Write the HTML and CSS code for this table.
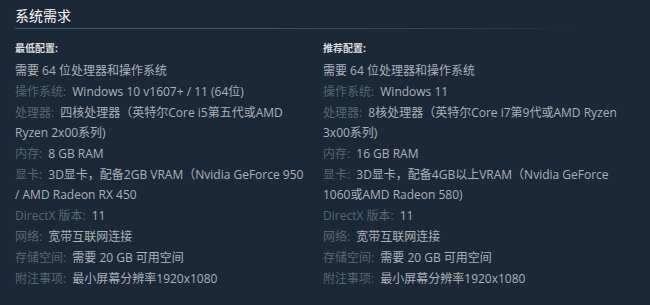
FILE: index.html
```html
<!DOCTYPE html>
<html lang="zh-CN">
<head>
<meta charset="utf-8">
<link rel="stylesheet" href="styles.css">
</head>
<body>
<div class="sysreq">
  <h2 class="title">系统需求</h2>
  <div class="cols">
    <div class="col">
      <div class="head">最低配置:</div>
      <ul class="list">
        <li>需要 64 位处理器和操作系统</li>
        <li><span class="lbl">操作系统:</span> Windows 10 v1607+ / 11 (64位)</li>
        <li><span class="lbl">处理器:</span> 四核处理器（英特尔Core i5第五代或AMD Ryzen 2x00系列)</li>
        <li><span class="lbl">内存:</span> 8 GB RAM</li>
        <li><span class="lbl">显卡:</span> 3D显卡，配备2GB VRAM（Nvidia GeForce 950 / AMD Radeon RX 450</li>
        <li><span class="lbl">DirectX 版本:</span> 11</li>
        <li><span class="lbl">网络:</span> 宽带互联网连接</li>
        <li><span class="lbl">存储空间:</span> 需要 20 GB 可用空间</li>
        <li><span class="lbl">附注事项:</span> 最小屏幕分辨率1920x1080</li>
      </ul>
    </div>
    <div class="col">
      <div class="head">推荐配置:</div>
      <ul class="list">
        <li>需要 64 位处理器和操作系统</li>
        <li><span class="lbl">操作系统:</span> Windows 11</li>
        <li><span class="lbl">处理器:</span> 8核处理器（英特尔Core i7第9代或AMD Ryzen 3x00系列)</li>
        <li><span class="lbl">内存:</span> 16 GB RAM</li>
        <li><span class="lbl">显卡:</span> 3D显卡，配备4GB以上VRAM（Nvidia GeForce 1060或AMD Radeon 580)</li>
        <li><span class="lbl">DirectX 版本:</span> 11</li>
        <li><span class="lbl">网络:</span> 宽带互联网连接</li>
        <li><span class="lbl">存储空间:</span> 需要 20 GB 可用空间</li>
        <li><span class="lbl">附注事项:</span> 最小屏幕分辨率1920x1080</li>
      </ul>
    </div>
  </div>
</div>
</body>
</html>
```
FILE: styles.css
```css
html, body {
  margin: 0;
  padding: 0;
  background: #1b2838;
}
body {
  font-family: "Open Sans", "Noto Sans CJK SC", sans-serif;
  color: #acb2b8;
  font-size: 12px;
}
.sysreq {
  padding: 6px 15px 0 15px;
}
.title {
  margin: 0;
  font-size: 14px;
  font-weight: normal;
  color: #ffffff;
  line-height: 20px;
  padding-bottom: 2px;
  border-bottom: 1px solid transparent;
  border-image: linear-gradient(to right, #3f5569 0%, #3f5569 40%, rgba(63,85,105,0.5) 75%, rgba(27,40,56,0) 90%) 1;
}
.cols {
  display: grid;
  grid-template-columns: 291px 300px;
  column-gap: 17px;
  padding-top: 12px;
}
.head {
  font-size: 10px;
  font-weight: bold;
  color: #dcdedf;
  line-height: 14px;
  margin-bottom: 6px;
}
.list {
  list-style: none;
  margin: 0;
  padding: 0;
}
.list li {
  line-height: 20px;
  margin-bottom: 1px;
}
.lbl {
  color: #556772;
  margin-right: 3px;
}
```
